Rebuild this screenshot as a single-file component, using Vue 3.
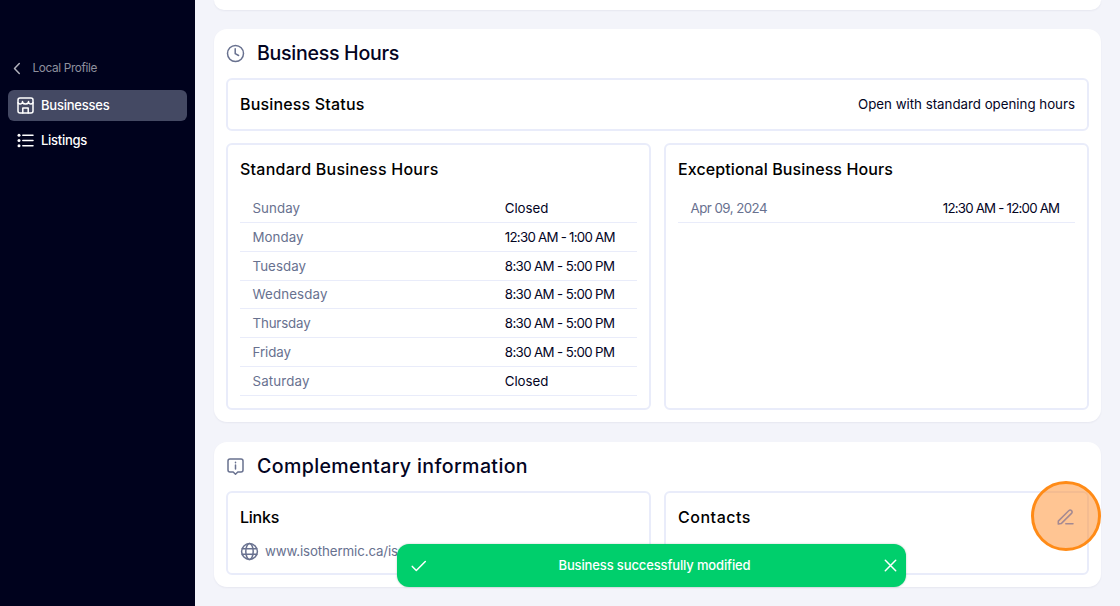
<script setup>
const hours = [
  { day: 'Sunday', time: 'Closed', dayWidth: 47.5, timeWidth: 43.5 },
  { day: 'Monday', time: '12:30 AM - 1:00 AM', dayWidth: 51, timeWidth: 110 },
  { day: 'Tuesday', time: '8:30 AM - 5:00 PM', dayWidth: 53.5, timeWidth: 109.5 },
  { day: 'Wednesday', time: '8:30 AM - 5:00 PM', dayWidth: 75, timeWidth: 109.5 },
  { day: 'Thursday', time: '8:30 AM - 5:00 PM', dayWidth: 58, timeWidth: 109.5 },
  { day: 'Friday', time: '8:30 AM - 5:00 PM', dayWidth: 38.5, timeWidth: 109.5 },
  { day: 'Saturday', time: 'Closed', dayWidth: 57, timeWidth: 43.5 },
]

// Tracks the letters of a label so that it fills the width given in pixels.
const vFit = {
  mounted(el, { value }) {
    const natural = el.getBoundingClientRect().width
    el.style.letterSpacing = `${(value - natural) / el.textContent.length}px`
  },
}
</script>

<template>
  <div class="app">
    <aside class="sidebar">
      <div class="back">
        <svg width="8" height="13" viewBox="0 0 8 13"><path d="M6.3 1.5 1.5 6.5l4.8 5" /></svg>
        <span v-fit="64.5">Local Profile</span>
      </div>
      <nav>
        <a class="item active">
          <svg width="17" height="17" viewBox="0 0 17 17">
            <rect x="1" y="1" width="15" height="15" rx="2" />
            <path d="M1 5.8c1.3 1.7 3.2 1.7 4.5-.3 1.3 2 4.7 2 6 0 1.3 2 3.2 2 4.5.3M5.5 5.5v-1M11.5 5.5v-1M5.8 16v-5h5.4v5" />
          </svg>
          <span v-fit="68.5">Businesses</span>
        </a>
        <a class="item">
          <svg width="17" height="17" viewBox="0 0 17 17">
            <path d="M5.8 3.2h10.2M5.8 8.5h10.2M5.8 13.8h10.2" />
            <g class="dots"><circle cx="2" cy="3.2" r="1.5" /><circle cx="2" cy="8.5" r="1.5" /><circle cx="2" cy="13.8" r="1.5" /></g>
          </svg>
          <span v-fit="46">Listings</span>
        </a>
      </nav>
    </aside>

    <main class="content">
      <section class="card previous"></section>

      <section class="card schedule">
        <h2>
          <svg width="19" height="19" viewBox="0 0 19 19"><circle cx="9.5" cy="9.5" r="8" /><path d="M9.2 4.7v5l3.4 1.8" /></svg>
          <span v-fit="142">Business Hours</span>
        </h2>
        <div class="box status">
          <h3><span v-fit="124.5">Business Status</span></h3>
          <span v-fit="217">Open with standard opening hours</span>
        </div>
        <div class="columns">
          <div class="box">
            <h3><span v-fit="198.5">Standard Business Hours</span></h3>
            <div class="rows">
              <div v-for="row in hours" :key="row.day" class="row">
                <span class="label" v-fit="row.dayWidth">{{ row.day }}</span>
                <span v-fit="row.timeWidth">{{ row.time }}</span>
              </div>
            </div>
          </div>
          <div class="box">
            <h3><span v-fit="215">Exceptional Business Hours</span></h3>
            <div class="rows">
              <div class="row">
                <span class="label" v-fit="76.5">Apr 09, 2024</span>
                <span v-fit="116.5">12:30 AM - 12:00 AM</span>
              </div>
            </div>
          </div>
        </div>
      </section>

      <section class="card extra">
        <h2>
          <svg width="19" height="19" viewBox="0 0 19 19">
            <path d="M4 2h11a2 2 0 0 1 2 2v9a2 2 0 0 1-2 2h-3.2l-2.3 2.2L7.2 15H4a2 2 0 0 1-2-2V4a2 2 0 0 1 2-2ZM9.5 8v4M9.5 5.2v.6" />
          </svg>
          <span v-fit="271">Complementary information</span>
        </h2>
        <div class="columns">
          <div class="box">
            <h3><span v-fit="39">Links</span></h3>
            <div class="link">
              <svg width="19" height="19" viewBox="0 0 19 19">
                <circle cx="9.5" cy="9.5" r="7.9" /><ellipse cx="9.5" cy="9.5" rx="3.7" ry="7.9" /><path d="M2.2 6.7h14.6M2.2 12.3h14.6" />
              </svg>
              <span v-fit="133">www.isothermic.ca/is</span>
            </div>
          </div>
          <div class="box contacts">
            <h3><span v-fit="73">Contacts</span></h3>
            <span class="highlight"></span>
            <svg class="edit" width="17" height="17" viewBox="0 0 17 17">
              <path d="M1.3 15.1v-3L11.7 1.7c2-1.8 4.5.7 2.8 2.7L4.2 14.6ZM8.8 14.7H16" />
            </svg>
          </div>
        </div>
      </section>
    </main>

    <div class="toast">
      <svg width="16" height="12" viewBox="0 0 16 12"><path d="m1.3 6.4 4 4.1 9-9" /></svg>
      <span v-fit="192">Business successfully modified</span>
      <svg width="13" height="13" viewBox="0 0 13 13"><path d="m1.3 1.3 10.4 10.4M11.7 1.3 1.3 11.7" /></svg>
    </div>
  </div>
</template>

<style>
body {
  margin: 0;
  overflow: hidden;
}
</style>

<style scoped>
* {
  box-sizing: border-box;
}
.app {
  position: relative;
  display: flex;
  height: 606px;
  overflow: hidden;
  background: #f3f4fa;
  color: #03041f;
  font-family: Inter, "Open Sans", sans-serif;
  font-size: 13.3px;
  line-height: 20px;
  white-space: nowrap;
}
svg {
  flex: none;
  fill: none;
  stroke: currentColor;
  stroke-width: 1.5;
  stroke-linecap: round;
  stroke-linejoin: round;
}
.sidebar {
  flex: none;
  width: 195px;
  padding: 58px 8px 0;
  background: #00021d;
  color: #fff;
}
.back {
  display: flex;
  align-items: center;
  gap: 11.5px;
  height: 20px;
  margin: 0 0 12px 5px;
  color: #8e909e;
  font-size: 11.8px;
}
.back svg {
  color: #b0b1bb;
}
.item {
  display: flex;
  align-items: center;
  gap: 7px;
  height: 31px;
  margin-bottom: 3.5px;
  padding-left: 9px;
  border-radius: 6px;
  font-size: 13px;
  font-weight: 500;
}
.item span {
  margin-top: -1px;
}
.active {
  background: #444963;
}
.dots {
  fill: currentColor;
  stroke: none;
}
.content {
  flex: 1;
  padding: 0 19px;
}
.card {
  padding: 11px 12px 0;
  border-radius: 13px;
  background: #fff;
  box-shadow: 0 1px 2px rgba(30, 35, 80, 0.06);
}
.previous {
  height: 10px;
  margin-bottom: 18.5px;
  padding: 0;
  border-radius: 0 0 13px 13px;
}
.schedule {
  height: 393.5px;
  margin-bottom: 19.5px;
}
.extra {
  height: 145.5px;
}
h2,
h3 {
  margin: 0;
  font-weight: 500;
}
h2 {
  display: flex;
  align-items: center;
  gap: 12px;
  height: 27px;
  margin-bottom: 11.5px;
  font-size: 19.6px;
}
h2 svg {
  color: #68718f;
}
h2 span {
  margin-top: -1px;
}
h3 {
  color: #000;
  font-size: 16px;
}
.box {
  position: relative;
  padding: 14px 12px 0;
  border: 2px solid #e9ecfa;
  border-radius: 6px;
}
.status {
  display: flex;
  align-items: center;
  justify-content: space-between;
  height: 52.5px;
  margin-bottom: 12.5px;
  padding-top: 0;
}
.columns {
  display: grid;
  grid-template-columns: 425px 425px;
  gap: 13px;
}
.schedule .columns {
  height: 267px;
}
.extra .columns {
  height: 84px;
}
.rows {
  margin-top: 15.2px;
}
.row {
  display: grid;
  grid-template-columns: 252.3px 1fr;
  align-items: center;
  justify-items: start;
  height: 28.8px;
  padding-left: 12.5px;
  border-bottom: 1px solid #e9ecfa;
}
.label,
.link {
  color: #68718f;
}
.link {
  display: flex;
  align-items: center;
  gap: 6px;
  margin-top: 14px;
}
.edit {
  position: absolute;
  top: 16px;
  right: 13px;
  color: #a48992;
}
.highlight {
  position: absolute;
  top: -12.5px;
  right: -14px;
  width: 70.5px;
  height: 70.5px;
  border: 3px solid #ff8b17;
  border-radius: 50%;
  background: rgba(255, 139, 40, 0.5);
}
.toast {
  position: absolute;
  top: 544px;
  left: 397px;
  display: flex;
  align-items: center;
  justify-content: space-between;
  width: 509px;
  height: 43px;
  padding: 0 9px 0 14px;
  border-radius: 12px;
  background: #00cf6c;
  color: #fff;
  font-size: 13px;
  font-weight: 500;
  box-shadow: 0 0 2px rgba(0, 80, 40, 0.3);
}
.toast span {
  margin: -1px 2px 0 0;
}
</style>
